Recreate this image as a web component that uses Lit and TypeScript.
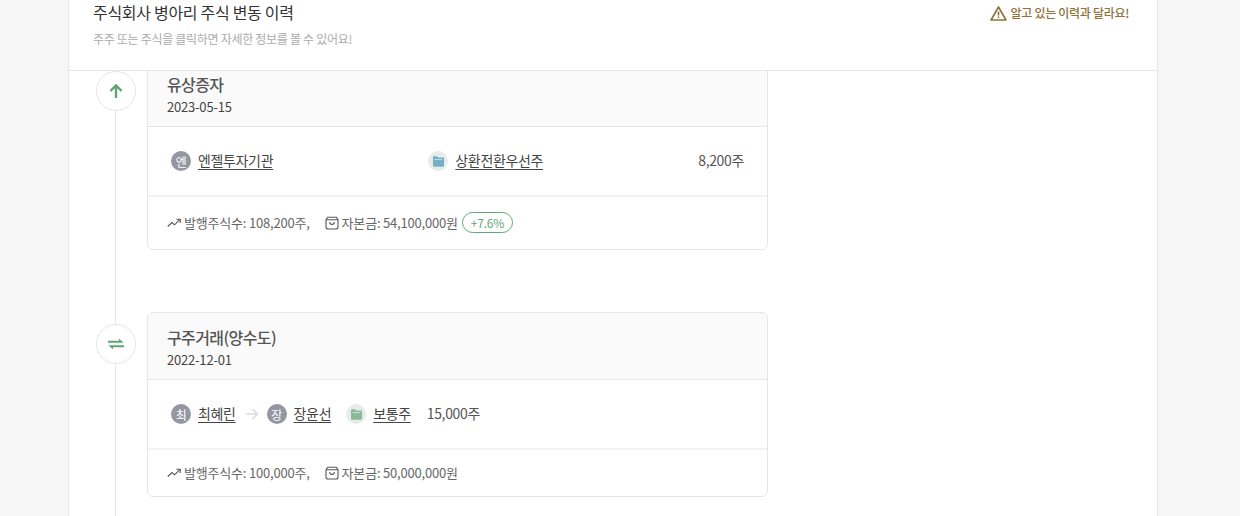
import {LitElement, html, css, svg} from 'lit';
import {customElement} from 'lit/decorators.js';

const trendIcon = html`<svg class="meta-icon" viewBox="0 0 14 14" fill="none" stroke="#555" stroke-width="1.1">
  <path d="M0.8 10.5 L5 6.6 L7.6 8.8 L13 3.4"/><path d="M9.4 3.2 H13.2 V7"/>
</svg>`;

const bagIcon = html`<svg class="meta-icon" viewBox="0 0 14 14" fill="none" stroke="#555" stroke-width="1.1">
  <path d="M2.6 1.2 H11.4 L13 3.6 V11 C13 12.2 12.2 13 11 13 H3 C1.8 13 1 12.2 1 11 V3.6 Z"/><path d="M1 3.8 H13"/><path d="M4.6 6 C4.8 9.2 9.2 9.2 9.4 6"/>
</svg>`;

const folder = (color: string) => svg`<svg class="folder" viewBox="0 0 10 10">
  <path fill=${color} d="M0 1.2 C0 .6 .4 .3 1 .3 H3.6 L4.6 1.3 H9 C9.6 1.3 10 1.7 10 2.3 V8.7 C10 9.3 9.6 9.7 9 9.7 H1 C.4 9.7 0 9.3 0 8.7 Z"/>
  <rect x="1.5" y="2.7" width="7" height="1" fill="#fff" opacity=".55"/>
</svg>`;

@customElement('app-root')
export class AppRoot extends LitElement {
  static styles = css`
    :host {
      display: block;
      height: 516px;
      overflow: hidden;
      background: #f6f6f6;
      font-family: "Noto Sans CJK KR", "Noto Sans", sans-serif;
      color: #444;
    }
    .panel {
      width: 1088px;
      height: 516px;
      margin-left: 68px;
      background: #fff;
      border-left: 1px solid #e6e6e6;
      border-right: 1px solid #e6e6e6;
      overflow: hidden;
    }
    .head {
      position: relative;
      z-index: 1;
      height: 70px;
      box-sizing: border-box;
      padding: 0 28px 0 24px;
      background: #fff;
      display: flex;
      justify-content: space-between;
      align-items: flex-start;
    }
    .head-line {
      position: relative;
      z-index: 1;
      height: 1px;
      background: #e6e6e6;
    }
    .title {
      margin: -1px 0 0;
      font-size: 16px;
      line-height: 26px;
      font-weight: 400;
      letter-spacing: -0.3px;
      color: #333;
    }
    .sub {
      margin: 5px 0 0;
      font-size: 12px;
      line-height: 18px;
      letter-spacing: -0.3px;
      color: #aaa;
    }
    .report {
      display: flex;
      align-items: center;
      gap: 4px;
      height: 26px;
      font-size: 12px;
      font-weight: 500;
      letter-spacing: -0.3px;
      color: #8e7238;
    }
    .report svg {
      width: 17px;
      height: 17px;
    }
    .report span {
      margin-bottom: 2px;
    }
    .timeline {
      position: relative;
      margin-top: -12px;
      padding-left: 27px;
      display: flex;
      flex-direction: column;
      gap: 62px;
    }
    .timeline::before {
      content: "";
      position: absolute;
      left: 46px;
      top: 0;
      bottom: -200px;
      width: 1px;
      background: #e6e6e6;
    }
    .event {
      position: relative;
      display: flex;
      align-items: flex-start;
      gap: 11px;
    }
    .node {
      flex: none;
      width: 40px;
      height: 40px;
      margin-top: 12px;
      box-sizing: border-box;
      border: 1px solid #e6e6e6;
      border-radius: 50%;
      background: #fff;
      display: flex;
      align-items: center;
      justify-content: center;
    }
    .card {
      width: 621px;
      box-sizing: border-box;
      border: 1px solid #e6e6e6;
      border-radius: 6px;
      overflow: hidden;
      background: #fff;
    }
    .card-head {
      padding: 11px 19px 0;
      height: 67px;
      box-sizing: border-box;
      background: #fafafa;
      border-bottom: 1px solid #e6e6e6;
    }
    .card-title {
      font-size: 16px;
      line-height: 26px;
      font-weight: 500;
      letter-spacing: -0.6px;
      color: #555;
    }
    .card-date {
      font-size: 13px;
      line-height: 20px;
      letter-spacing: -0.2px;
      color: #444;
    }
    .card-body {
      height: 70px;
      box-sizing: border-box;
      padding: 0 23px;
      border-bottom: 2px solid #f3f3f3;
      display: flex;
      align-items: center;
      font-size: 14px;
      letter-spacing: -0.35px;
      color: #555;
    }
    .party {
      display: flex;
      align-items: center;
      gap: 7px;
    }
    .avatar {
      width: 20px;
      height: 20px;
      border-radius: 50%;
      background: #9496a1;
      color: #fff;
      font-size: 12px;
      display: flex;
      align-items: center;
      justify-content: center;
    }
    .avatar.stock {
      background: #eaeaea;
    }
    .folder {
      width: 11px;
      height: 11px;
    }
    .link {
      margin-bottom: 2px;
      color: #444;
      text-decoration: underline;
      text-underline-offset: 3px;
    }
    .qty {
      margin-bottom: 2px;
    }
    .spread {
      justify-content: space-between;
    }
    .arrow {
      width: 14px;
      height: 14px;
      margin: 0 8px 0 9px;
    }
    .body-b .stock-party {
      margin-left: 15px;
    }
    .body-b .qty {
      margin-left: 16px;
    }
    .card-foot {
      padding: 0 19px;
      display: flex;
      align-items: center;
      font-size: 13px;
      letter-spacing: -0.2px;
      color: #666;
    }
    .foot-a {
      height: 52px;
    }
    .foot-b {
      height: 46px;
    }
    .meta {
      display: flex;
      align-items: center;
      gap: 3px;
    }
    .meta span {
      margin-bottom: 2px;
    }
    .meta + .meta {
      margin-left: 15px;
    }
    .meta-icon {
      width: 14px;
      height: 14px;
    }
    .pill {
      margin: 0 0 2px 4px;
      height: 21px;
      padding: 0 8px;
      box-sizing: border-box;
      border: 1px solid #62a878;
      border-radius: 11px;
      font-size: 12px;
      line-height: 19px;
      color: #62a878;
    }
  `;

  render() {
    return html`
      <div class="panel">
        <header class="head">
          <div>
            <h2 class="title">주식회사 병아리 주식 변동 이력</h2>
            <p class="sub">주주 또는 주식을 클릭하면 자세한 정보를 볼 수 있어요!</p>
          </div>
          <div class="report">
            <svg viewBox="0 0 17 17" fill="none" stroke="#8e7238" stroke-width="1.6" stroke-linejoin="round">
              <path d="M8.5 2 L16 15 H1 Z"/><path d="M8.5 6.5 V10.6 M8.5 11.6 V13"/>
            </svg>
            <span>알고 있는 이력과 달라요!</span>
          </div>
        </header>
        <div class="head-line"></div>
        <div class="timeline">
          <section class="event">
            <div class="node">
              <svg width="16" height="16" viewBox="0 0 16 16" fill="none" stroke="#5fa571" stroke-width="2.4">
                <path d="M8 15 V2.5 M2.4 8 L8 2.5 L13.6 8"/>
              </svg>
            </div>
            <div class="card">
              <div class="card-head">
                <div class="card-title">유상증자</div>
                <div class="card-date">2023-05-15</div>
              </div>
              <div class="card-body spread">
                <div class="party"><span class="avatar">엔</span><span class="link">엔젤투자기관</span></div>
                <div class="party"><span class="avatar stock">${folder('#72b0c6')}</span><span class="link">상환전환우선주</span></div>
                <div class="qty">8,200주</div>
              </div>
              <div class="card-foot foot-a">
                <span class="meta">${trendIcon}<span>발행주식수: 108,200주,</span></span>
                <span class="meta">${bagIcon}<span>자본금: 54,100,000원</span></span>
                <span class="pill">+7.6%</span>
              </div>
            </div>
          </section>
          <section class="event">
            <div class="node">
              <svg width="16" height="16" viewBox="0 0 16 16" fill="#5fa571">
                <path d="M0 4.7 H11 V2.6 L15.6 6.7 H0 Z"/>
                <path d="M0.4 9.3 H16 V11.3 H5 V13.4 Z"/>
              </svg>
            </div>
            <div class="card">
              <div class="card-head">
                <div class="card-title">구주거래(양수도)</div>
                <div class="card-date">2022-12-01</div>
              </div>
              <div class="card-body body-b">
                <div class="party"><span class="avatar">최</span><span class="link">최혜린</span></div>
                <svg class="arrow" viewBox="0 0 14 14" fill="none" stroke="#ddd" stroke-width="1.6">
                  <path d="M1 7 H12.5 M7.5 2 L12.5 7 L7.5 12"/>
                </svg>
                <div class="party"><span class="avatar">장</span><span class="link">장윤선</span></div>
                <div class="party stock-party"><span class="avatar stock">${folder('#86bb97')}</span><span class="link">보통주</span></div>
                <div class="qty">15,000주</div>
              </div>
              <div class="card-foot foot-b">
                <span class="meta">${trendIcon}<span>발행주식수: 100,000주,</span></span>
                <span class="meta">${bagIcon}<span>자본금: 50,000,000원</span></span>
              </div>
            </div>
          </section>
        </div>
      </div>
    `;
  }
}
